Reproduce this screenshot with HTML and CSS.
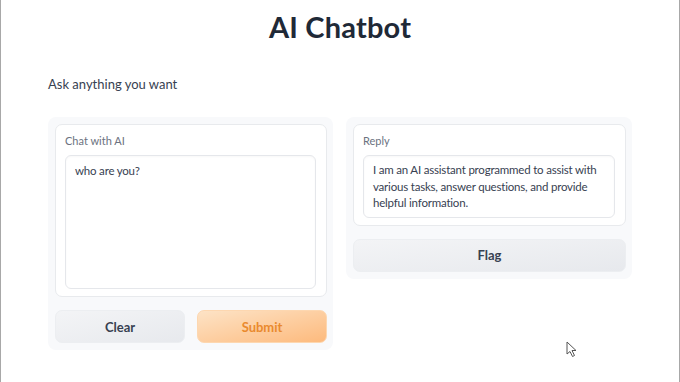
FILE: index.html
```html
<!DOCTYPE html>
<html>
<head>
<meta charset="utf-8">
<link rel="stylesheet" href="styles.css">
</head>
<body>
<div class="frame">
  <h1 class="title">AI Chatbot</h1>
  <p class="desc">Ask anything you want</p>
  <div class="cols">
    <div class="panel left">
      <div class="block">
        <div class="label">Chat with AI</div>
        <div class="textarea tall">who are you?</div>
      </div>
      <div class="btnrow">
        <button class="btn secondary">Clear</button>
        <button class="btn primary">Submit</button>
      </div>
    </div>
    <div class="panel right">
      <div class="block">
        <div class="label">Reply</div>
        <div class="textarea short">I am an AI assistant programmed to assist with various tasks, answer questions, and provide helpful information.</div>
      </div>
      <button class="btn secondary wide">Flag</button>
    </div>
  </div>
  <svg class="cursor" width="12" height="17" viewBox="0 0 12 17"><path d="M1 1 L1 13 L4 10.5 L6.5 15.5 L8.5 14.5 L6 9.5 L10 9.5 Z" fill="#fff" stroke="#555" stroke-width="1"/></svg>
</div>
</body>
</html>
```
FILE: styles.css
```css
html, body { margin: 0; padding: 0; background: #fff; }
body { font-family: Lato, "Noto Sans", sans-serif; color: #374151; }
.frame {
  position: relative;
  width: 680px;
  height: 382px;
  border-left: 1px solid #a8a8a8;
  border-right: 1px solid #a8a8a8;
  box-sizing: border-box;
  padding: 0 47px 0 47px;
}
.title {
  margin: 0;
  padding-top: 9px;
  text-align: center;
  font-size: 29px;
  font-weight: 700;
  letter-spacing: 0.2px;
  color: #1f2937;
  line-height: 36px;
}
.desc {
  margin: 0;
  padding-top: 30px;
  font-size: 13px;
  line-height: 18px;
  color: #374151;
}
.cols {
  display: flex;
  gap: 13px;
  margin-top: 24px;
  align-items: flex-start;
}
.panel {
  background: #f8f9fb;
  border-radius: 8px;
  padding: 7px 6px 7px 7px;
  display: flex;
  flex-direction: column;
  gap: 13px;
}
.left { width: 272px; flex: none; }
.right { width: 273px; flex: none; }
.block {
  background: #fff;
  border: 1px solid #e8eaed;
  border-radius: 7px;
  padding: 9px 10px 7px 9px;
}
.label {
  font-size: 11px;
  line-height: 14px;
  color: #6b7280;
  margin-bottom: 7px;
}
.textarea {
  border: 1px solid #e5e7eb;
  border-radius: 6px;
  padding: 7px 4px 7px 9px;
  font-size: 11.5px;
  line-height: 16.5px;
  letter-spacing: -0.2px;
  color: #374151;
  box-shadow: inset 0 1px 2px rgba(0,0,0,0.03);
}
.tall { height: 118px; }
.short { padding-top: 6px; padding-bottom: 5px; }
.btnrow { display: flex; gap: 12px; }
.btn {
  flex: 1;
  height: 33px;
  border-radius: 7px;
  border: 1px solid #eceef1;
  font-family: Lato, "Noto Sans", sans-serif;
  font-size: 13px;
  font-weight: 700;
  cursor: default;
}
.secondary {
  background: linear-gradient(to bottom right, #f3f4f6, #e7e9ed);
  color: #374151;
}
.primary {
  background: linear-gradient(to bottom right, #fde3c6, #fdba7d);
  border-color: #fdd7b0;
  color: #ea8a2e;
}
.wide { flex: none; width: 100%; }
.cursor { position: absolute; left: 565px; top: 341px; }
```
